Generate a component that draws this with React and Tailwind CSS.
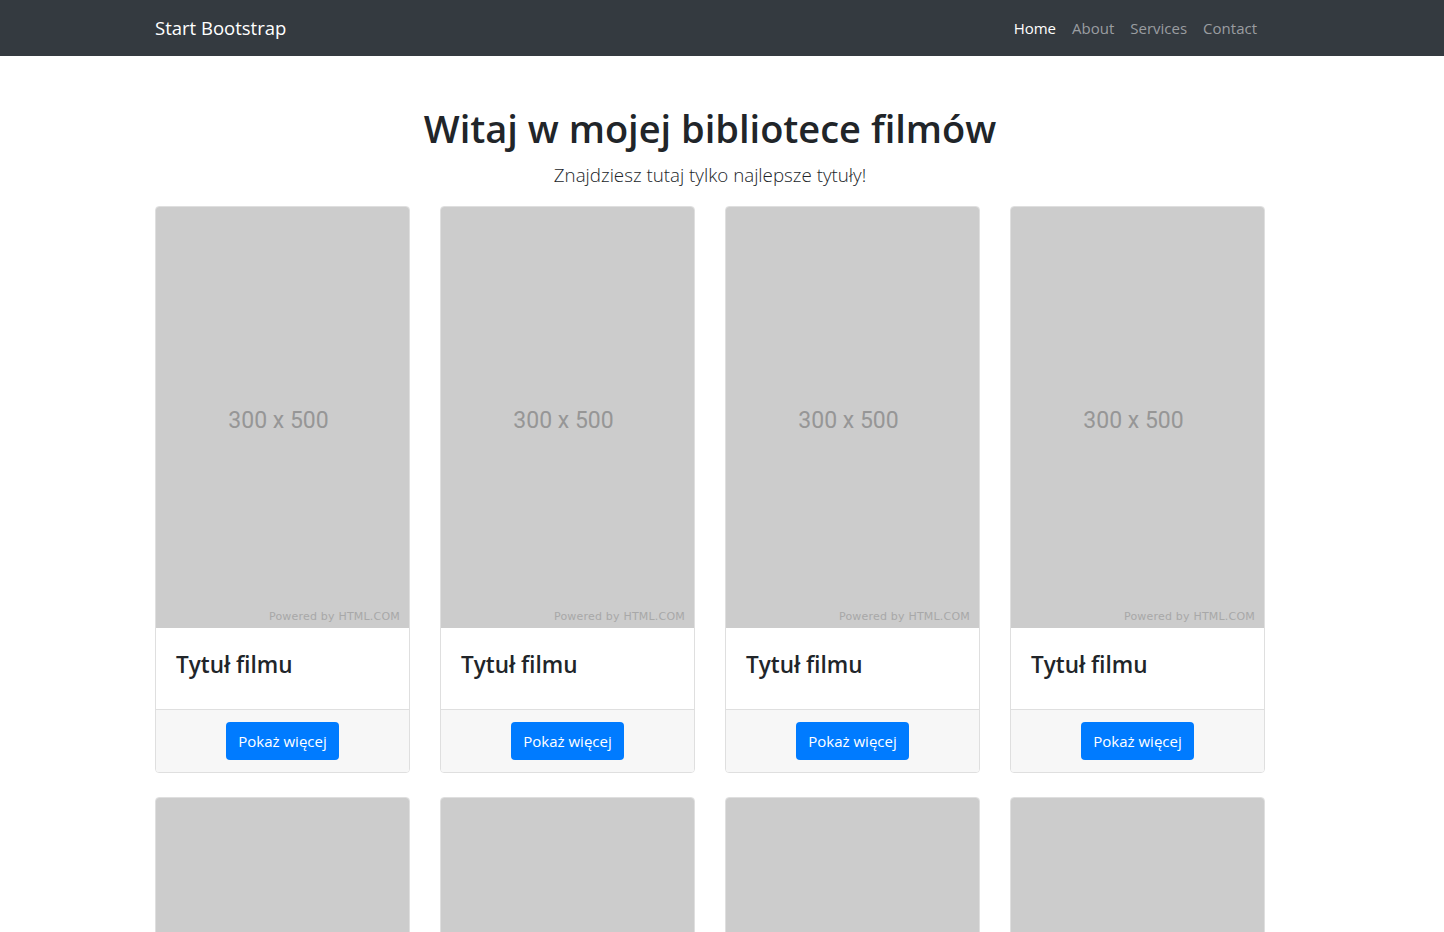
const font = { fontFamily: '"Segoe UI", "Open Sans", "Noto Sans", sans-serif' };

function Card() {
  return (
    <div className="flex flex-col rounded border border-[#dfdfdf] bg-white overflow-hidden">
      <div className="relative h-[421px] bg-[#cccccc] flex items-center justify-center">
        <span className="text-[23px] text-[#969696] font-['Roboto',sans-serif] -ml-2 mt-[8px]">300 x 500</span>
        <span className="absolute right-[9px] bottom-[3px] text-[11px] text-[#a8a8a8] tracking-[0.2px] font-['DejaVu_Sans',sans-serif]">
          Powered by HTML.COM
        </span>
      </div>
      <div className="px-5 pt-[23px] pb-5">
        <h4 className="text-[22.5px] leading-[28.8px] font-semibold text-[#212529] mb-[9px]">Tytuł filmu</h4>
      </div>
      <div className="border-t border-[#dfdfdf] bg-[#f7f7f7] px-5 py-3 flex justify-center">
        <button className="h-[38px] px-3 rounded bg-[#007bff] text-white text-[15px]">Pokaż więcej</button>
      </div>
    </div>
  );
}

export default function App() {
  return (
    <div className="min-h-screen bg-white" style={font}>
      <nav className="h-14 bg-[#343a40]">
        <div className="ml-[155px] w-[1110px] h-full flex items-center justify-between">
          <a className="text-[18.5px] leading-[30px] text-white">Start Bootstrap</a>
          <ul className="flex">
            <li className="px-2 text-[15px] leading-6 text-white">Home</li>
            <li className="px-2 text-[15px] leading-6 text-[#9a9da0]">About</li>
            <li className="px-2 text-[15px] leading-6 text-[#9a9da0]">Services</li>
            <li className="px-2 text-[15px] leading-6 text-[#9a9da0]">Contact</li>
          </ul>
        </div>
      </nav>
      <main className="ml-[155px] w-[1110px] pt-12">
        <h1 className="text-center text-[38px] leading-[48px] font-semibold text-[#212529] mb-2">
          Witaj w mojej bibliotece filmów
        </h1>
        <p className="text-center text-[18.75px] leading-[30px] font-light text-[#212529] mb-4">
          Znajdziesz tutaj tylko najlepsze tytuły!
        </p>
        <div className="grid grid-cols-4 gap-x-[30px] gap-y-6">
          {Array.from({ length: 8 }).map((_, i) => (
            <Card key={i} />
          ))}
        </div>
      </main>
    </div>
  );
}
